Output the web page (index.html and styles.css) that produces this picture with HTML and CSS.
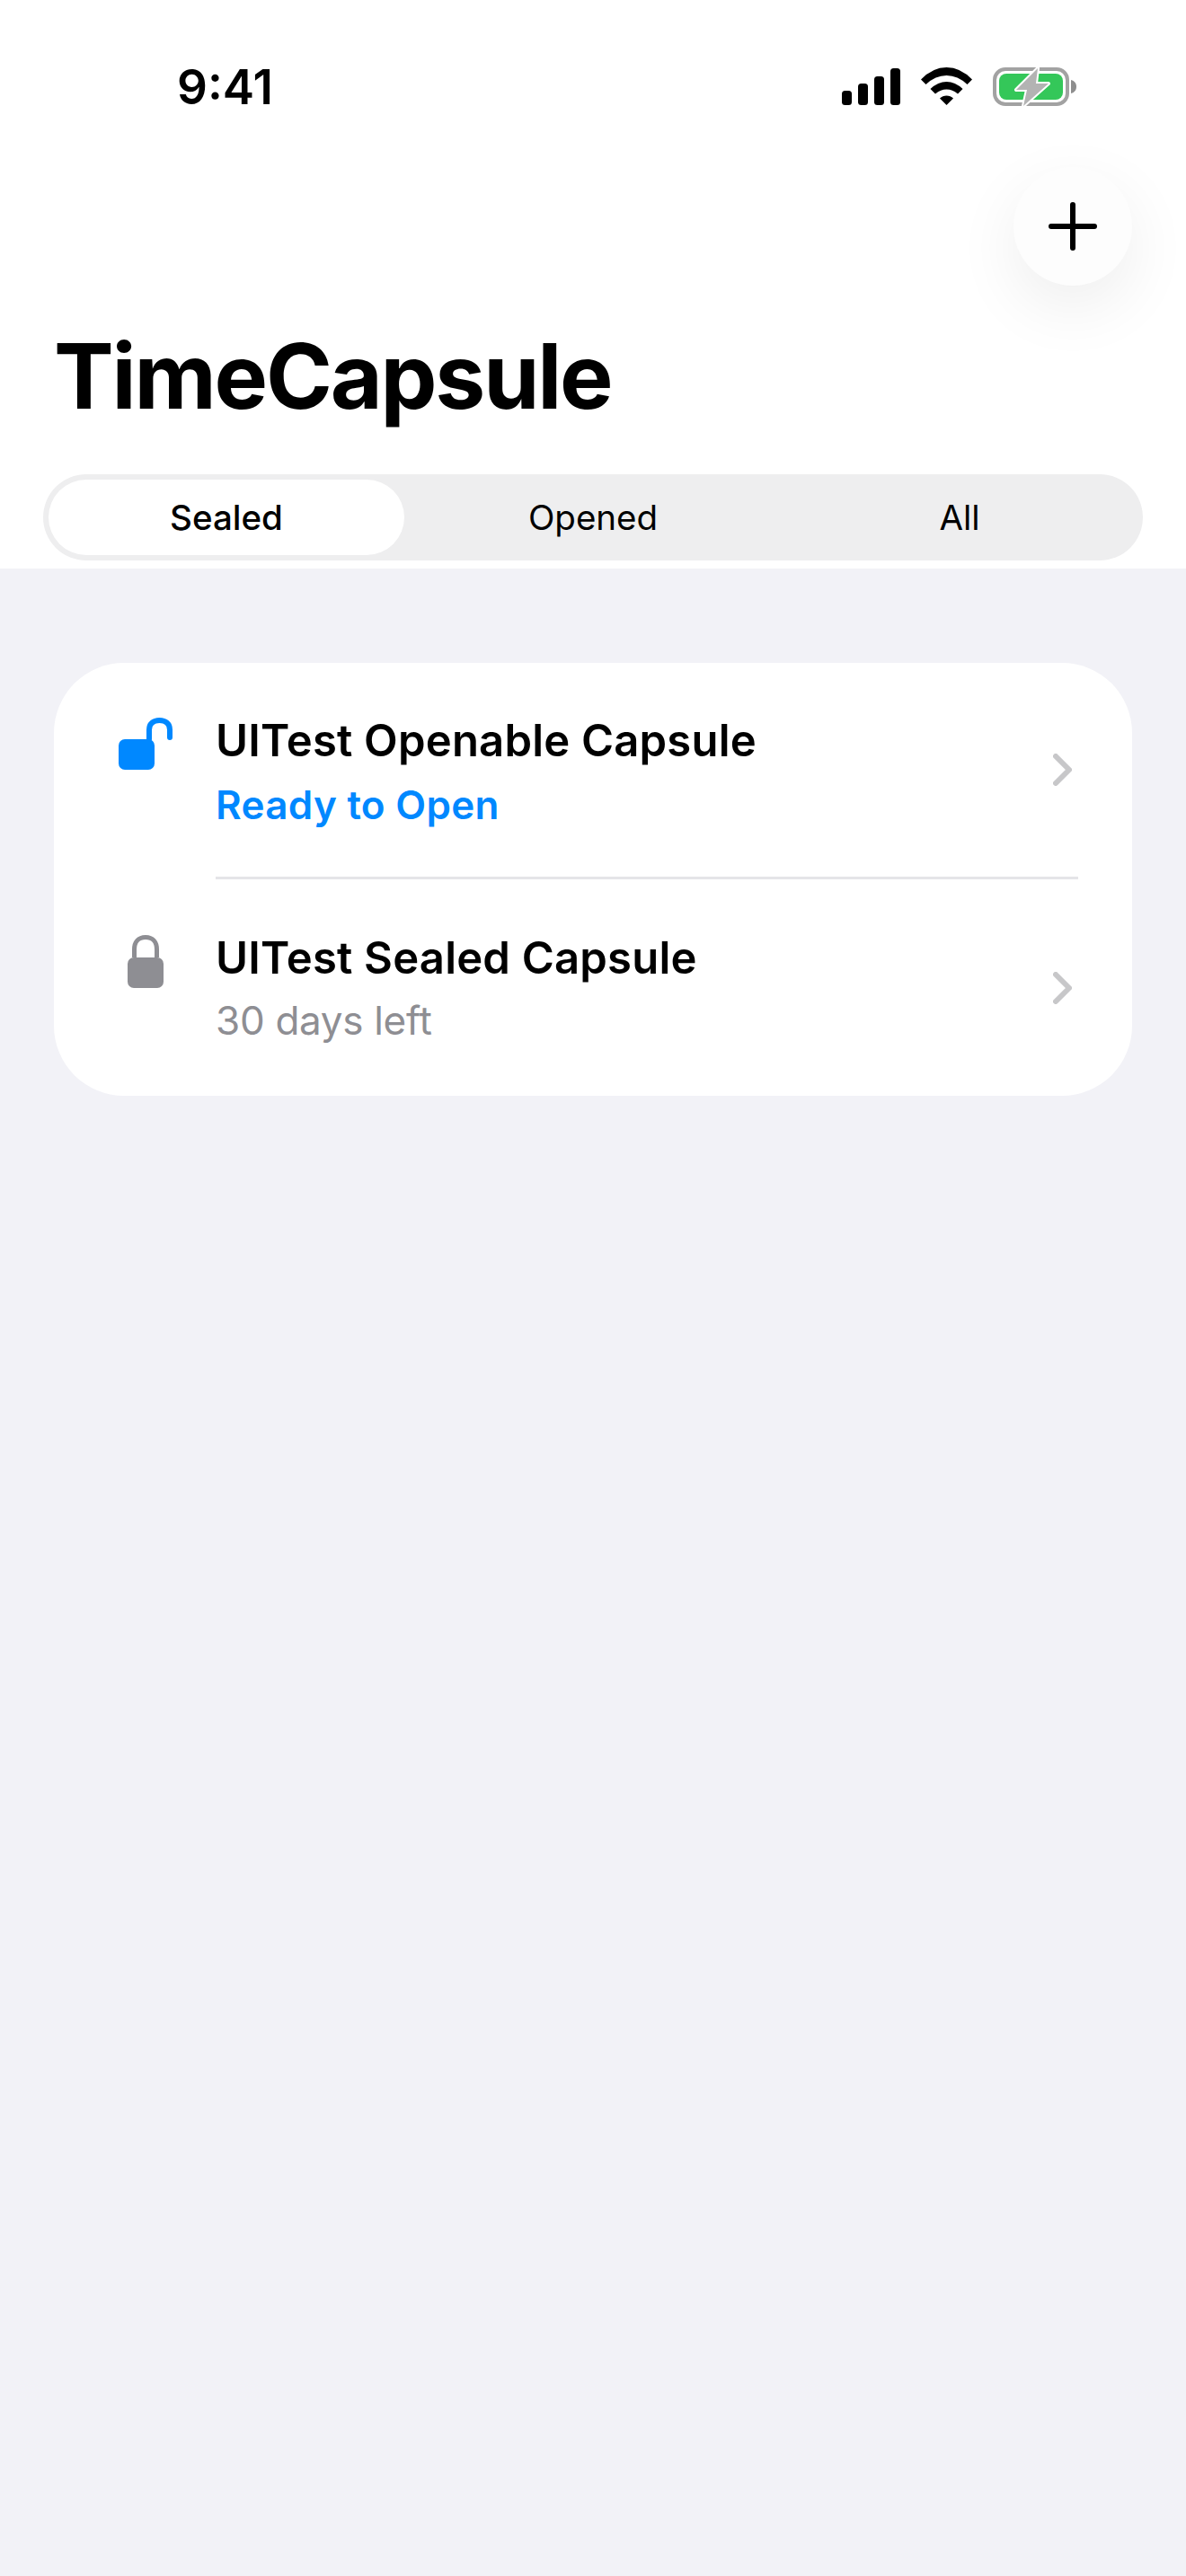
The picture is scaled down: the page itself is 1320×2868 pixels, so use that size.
FILE: index.html
```html
<!DOCTYPE html>
<html lang="en">
<head>
<meta charset="utf-8">
<title>TimeCapsule</title>
<link rel="stylesheet" href="styles.css">
</head>
<body>
<div class="screen">
  <header class="header">
    <div class="status-bar">
      <span class="time">9:41</span>
      <div class="status-icons">
        <svg class="signal" width="65" height="41" viewBox="0 0 65 41"><rect x="0" y="25" width="11" height="16" rx="3.5"/><rect x="18" y="17" width="11" height="24" rx="3.5"/><rect x="36" y="9" width="11" height="32" rx="3.5"/><rect x="54" y="0" width="11" height="41" rx="3.5"/></svg>
        <svg class="wifi" width="57" height="42" viewBox="0 0 57 42"><path d="M0 13.5Q13 0 28.5 0Q44 0 57 13.5L51.5 19Q41 9 28.5 9Q16 9 5.5 19Z"/><path d="M10.5 24Q19 16 28.5 16Q38 16 46.5 24L41 29.5Q35 24.5 28.5 24.5Q22 24.5 16 29.5Z"/><path d="M21 34.5Q24 31.5 28.5 31.5Q33 31.5 36 34.5L28.5 42Z"/></svg>
        <svg class="battery" width="93" height="43" viewBox="0 0 93 43"><rect class="battery-shell" x="2" y="2" width="81" height="39" rx="12"/><rect class="battery-level" x="7" y="7" width="71" height="29" rx="8"/><path class="battery-nub" d="M87 14C91 15 93 18 93 21.500C93 25 91 28 87 29Z"/><path class="battery-bolt" d="M50 1L26 25H38L34 43L62 18H48Z"/></svg>
      </div>
    </div>
    <div class="toolbar">
      <button class="add-button" type="button" aria-label="Add">
        <svg width="54" height="54" viewBox="0 0 54 54"><path class="plus" d="M27 3V51M3 27H51"/></svg>
      </button>
    </div>
    <h1 class="title">TimeCapsule</h1>
    <div class="segments">
      <div class="segment segment-active">Sealed</div>
      <div class="segment">Opened</div>
      <div class="segment">All</div>
    </div>
  </header>
  <main class="content">
    <section class="card">
      <article class="row row-first">
        <svg class="row-icon" width="60" height="60" viewBox="0 0 60 60"><path class="shackle-open" d="M34 24V13.500C34 7 38.500 3 45.500 3C52.500 3 57 7 57 13.500V22"/><rect class="fill-blue" x="0" y="24" width="40" height="34" rx="7"/></svg>
        <div class="row-text">
          <div class="row-title">UITest Openable Capsule</div>
          <div class="row-sub row-sub-ready">Ready to Open</div>
        </div>
        <svg class="chevron" width="21" height="36" viewBox="0 0 21 36"><path d="M3 3L18 18L3 33"/></svg>
      </article>
      <div class="divider"></div>
      <article class="row row-last">
        <svg class="row-icon" width="60" height="60" viewBox="0 0 60 60"><path class="shackle-closed" d="M17.500 26V17C17.500 9 22 3.500 30 3.500C38 3.500 42.500 9 42.500 17V26"/><rect class="fill-gray" x="10" y="26" width="40" height="34" rx="7"/></svg>
        <div class="row-text">
          <div class="row-title">UITest Sealed Capsule</div>
          <div class="row-sub">30 days left</div>
        </div>
        <svg class="chevron" width="21" height="36" viewBox="0 0 21 36"><path d="M3 3L18 18L3 33"/></svg>
      </article>
    </section>
  </main>
</div>
</body>
</html>
```

FILE: styles.css
```css
* { box-sizing: border-box; }
html, body { margin: 0; padding: 0; }
body {
  font-family: Inter, "Liberation Sans", sans-serif;
  color: #000;
  background: #f2f2f7;
}
.screen {
  width: 1320px;
  height: 2868px;
  display: flex;
  flex-direction: column;
  background: #f2f2f7;
}
.header {
  background: #fff;
  height: 633px;
  display: flex;
  flex-direction: column;
}
.status-bar {
  height: 75px;
  margin-top: 75px;
  display: flex;
  align-items: flex-start;
  justify-content: space-between;
  padding: 0 122px 0 197px;
}
.time {
  font-size: 53px;
  font-weight: 600;
  line-height: 44px;
}
.status-icons {
  display: flex;
  align-items: flex-start;
}
.signal { margin-top: 1px; margin-right: 23px; fill: #000; }
.wifi { margin-right: 23px; fill: #000; }
.battery-shell { fill: none; stroke: #a2a2a2; stroke-width: 4; }
.battery-level { fill: #34c759; }
.battery-nub { fill: #8e8e8e; }
.battery-bolt {
  fill: #b3b3b3;
  stroke: #fff;
  stroke-width: 4;
  stroke-linejoin: round;
  paint-order: stroke;
}
.toolbar {
  display: flex;
  justify-content: flex-end;
  padding: 36px 60px 0 0;
}
.add-button {
  width: 132px;
  height: 132px;
  padding: 0;
  border: 0;
  border-radius: 50%;
  background: #fdfdfd;
  box-shadow: 0 24px 72px rgba(0, 0, 0, 0.07);
  display: flex;
  align-items: center;
  justify-content: center;
}
.plus {
  fill: none;
  stroke: #000;
  stroke-width: 6;
  stroke-linecap: round;
}
.title {
  margin: 40px 0 0 60px;
  font-size: 100px;
  font-weight: 700;
  line-height: 122px;
  letter-spacing: -2.2px;
}
.segments {
  margin: 48px 48px 0;
  height: 96px;
  border-radius: 48px;
  background: #eeeeef;
  display: grid;
  grid-template-columns: repeat(3, 1fr);
  align-items: stretch;
}
.segment {
  display: flex;
  align-items: center;
  justify-content: center;
  font-size: 38.5px;
  font-weight: 400;
}
.segment-active {
  margin: 6px;
  background: #fff;
  border-radius: 42px;
  font-weight: 500;
}
.content {
  flex: 1;
  padding: 105px 60px 0;
}
.card {
  background: #fff;
  border-radius: 78px;
  padding: 0 60px 0 72px;
}
.row {
  display: flex;
  align-items: center;
  gap: 48px;
  padding-right: 7px;
}
.row-first { height: 238px; }
.row-last { height: 241px; }
.row-icon { flex: none; align-self: flex-start; margin-top: 61px; overflow: visible; }
.row-text { flex: 1; padding-top: 2px; }
.row-first .row-text { padding-top: 6px; }
.row-title {
  font-size: 49px;
  font-weight: 560;
  line-height: 60px;
  letter-spacing: 0.2px;
}
.row-sub {
  margin-top: 10px;
  font-size: 44px;
  line-height: 58px;
  letter-spacing: -0.3px;
  color: #8e8e93;
}
.row-sub-ready {
  margin-top: 12px;
  color: #0088ff;
  font-weight: 600;
  letter-spacing: 0.3px;
}
.divider {
  height: 3px;
  margin-left: 108px;
  background: #e5e5e8;
}
.chevron path {
  fill: none;
  stroke: #c7c7c9;
  stroke-width: 6;
  stroke-linecap: round;
  stroke-linejoin: round;
}
.shackle-open { fill: none; stroke: #0088ff; stroke-width: 6; stroke-linecap: round; }
.shackle-closed { fill: none; stroke: #8e8e93; stroke-width: 5; }
.fill-blue { fill: #0088ff; }
.fill-gray { fill: #8e8e93; }
```
